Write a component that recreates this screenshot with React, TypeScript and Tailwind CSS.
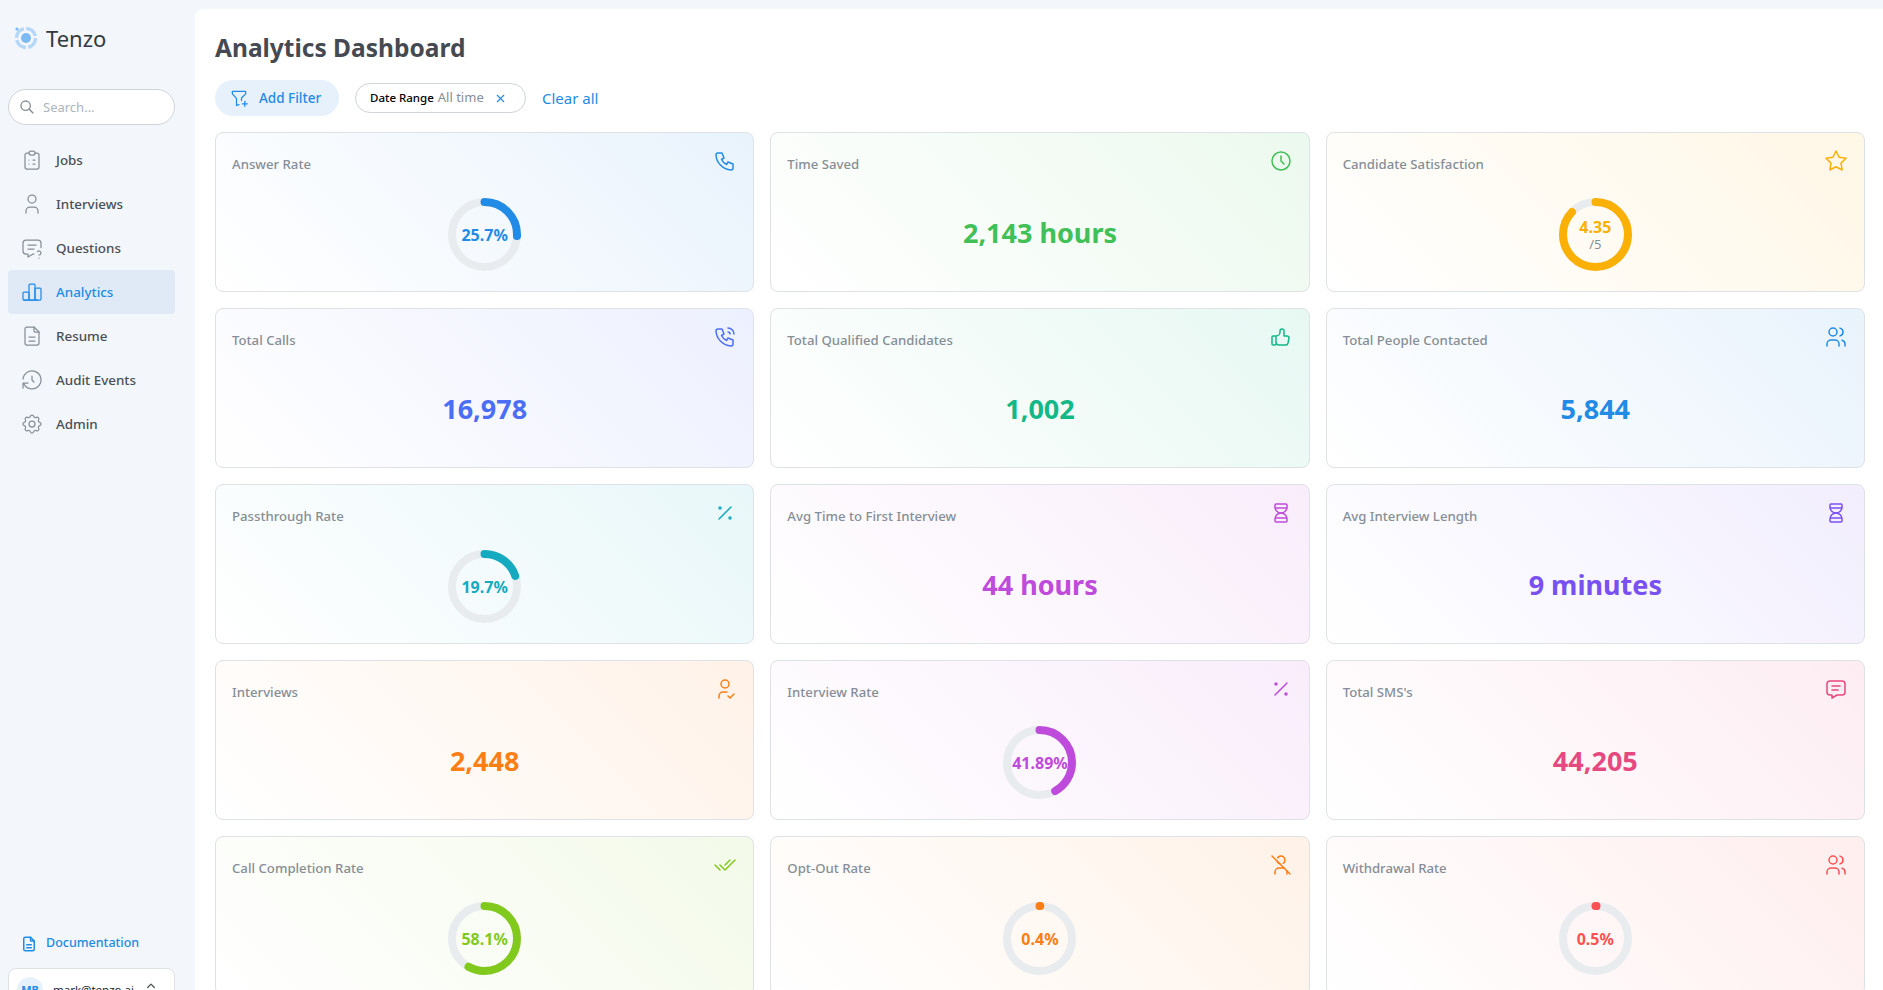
import React from "react";
import {
  TbChartBar,
  TbChecks,
  TbClipboardList,
  TbClock,
  TbFileDescription,
  TbFilterPlus,
  TbHistory,
  TbHourglass,
  TbMessage,
  TbMessageQuestion,
  TbPercentage,
  TbPhone,
  TbPhoneCall,
  TbSearch,
  TbSelector,
  TbSettings,
  TbStar,
  TbThumbUp,
  TbUser,
  TbUserCheck,
  TbUserOff,
  TbUsers,
  TbX,
} from "react-icons/tb";

const navItems = [
  { label: "Jobs", icon: TbClipboardList },
  { label: "Interviews", icon: TbUser },
  { label: "Questions", icon: TbMessageQuestion },
  { label: "Analytics", icon: TbChartBar, active: true },
  { label: "Resume", icon: TbFileDescription },
  { label: "Audit Events", icon: TbHistory },
  { label: "Admin", icon: TbSettings },
];

type Stat = {
  label: string;
  icon: React.ComponentType<{ size?: number; strokeWidth?: number }>;
  color: string;
  tint: string;
  value: string;
  ring?: number;
  sub?: string;
};

const stats: Stat[] = [
  { label: "Answer Rate", icon: TbPhone, color: "text-[#228be6]", tint: "to-[#e9f3fc]", value: "25.7%", ring: 25.7 },
  { label: "Time Saved", icon: TbClock, color: "text-[#40c057]", tint: "to-[#ecf9ee]", value: "2,143 hours" },
  { label: "Candidate Satisfaction", icon: TbStar, color: "text-[#fab005]", tint: "to-[#fff7e6]", value: "4.35", ring: 87, sub: "/5" },
  { label: "Total Calls", icon: TbPhoneCall, color: "text-[#4c6ef5]", tint: "to-[#edf0fe]", value: "16,978" },
  { label: "Total Qualified Candidates", icon: TbThumbUp, color: "text-[#12b886]", tint: "to-[#e7f8f3]", value: "1,002" },
  { label: "Total People Contacted", icon: TbUsers, color: "text-[#228be6]", tint: "to-[#e9f3fc]", value: "5,844" },
  { label: "Passthrough Rate", icon: TbPercentage, color: "text-[#15aabf]", tint: "to-[#e8f7f9]", value: "19.7%", ring: 19.7 },
  { label: "Avg Time to First Interview", icon: TbHourglass, color: "text-[#be4bdb]", tint: "to-[#f9edfb]", value: "44 hours" },
  { label: "Avg Interview Length", icon: TbHourglass, color: "text-[#7950f2]", tint: "to-[#f2eefe]", value: "9 minutes" },
  { label: "Interviews", icon: TbUserCheck, color: "text-[#fd7e14]", tint: "to-[#fff2e8]", value: "2,448" },
  { label: "Interview Rate", icon: TbPercentage, color: "text-[#be4bdb]", tint: "to-[#f9edfb]", value: "41.89%", ring: 41.89 },
  { label: "Total SMS's", icon: TbMessage, color: "text-[#e64980]", tint: "to-[#fdedf2]", value: "44,205" },
  { label: "Call Completion Rate", icon: TbChecks, color: "text-[#82c91e]", tint: "to-[#f3fae9]", value: "58.1%", ring: 58.1 },
  { label: "Opt-Out Rate", icon: TbUserOff, color: "text-[#fd7e14]", tint: "to-[#fff2e8]", value: "0.4%", ring: 0.4 },
  { label: "Withdrawal Rate", icon: TbUsers, color: "text-[#fa5252]", tint: "to-[#ffeeee]", value: "0.5%", ring: 0.5 },
];

const Ring = ({ percent, children }: { percent: number; children: React.ReactNode }) => {
  const radius = 32.5;
  const circumference = 2 * Math.PI * radius;
  return (
    <div className="relative h-[73px] w-[73px]">
      <svg width="73" height="73" viewBox="0 0 73 73" className="-rotate-90">
        <circle cx="36.5" cy="36.5" r={radius} fill="none" stroke="#e9ecef" strokeWidth="8" />
        <circle
          cx="36.5"
          cy="36.5"
          r={radius}
          fill="none"
          stroke="currentColor"
          strokeWidth="8"
          strokeLinecap="round"
          strokeDasharray={`${(circumference * percent) / 100} ${circumference}`}
        />
      </svg>
      <div className="absolute inset-0 flex flex-col items-center justify-center">{children}</div>
    </div>
  );
};

const StatCard = ({ stat }: { stat: Stat }) => {
  const Icon = stat.icon;
  return (
    <div className={`flex h-40 flex-col rounded-lg border border-[#dee2e6] bg-linear-45 from-white px-4 pt-4 ${stat.tint}`}>
      <div className="flex items-start justify-between">
        <span className="mt-[5px] text-[13.2px] leading-5 font-medium text-[#868e96]">{stat.label}</span>
        <span className={stat.color}>
          <Icon size={24} strokeWidth={1.5} />
        </span>
      </div>
      <div className={`flex flex-1 items-center justify-center pt-1 ${stat.color}`}>
        {stat.ring !== undefined ? (
          <Ring percent={stat.ring}>
            <span className="text-[16px] leading-[18px] font-bold">{stat.value}</span>
            {stat.sub && <span className="text-[13px] leading-4 text-[#868e96]">{stat.sub}</span>}
          </Ring>
        ) : (
          <span className="mb-[3px] text-[27px] leading-8 font-bold">{stat.value}</span>
        )}
      </div>
    </div>
  );
};

export default function App() {
  return (
    <div className="flex h-screen overflow-hidden bg-[#f3f6fa] font-['Noto_Sans',sans-serif]">
      <aside className="flex h-full w-[195px] shrink-0 flex-col pr-5 pl-2">
        <div className="flex h-[78px] items-center gap-[7px] pb-[2px] pl-[5px]">
          <svg width="26" height="26" viewBox="0 0 26 26" fill="none">
            <circle cx="13" cy="13" r="9.5" stroke="#b5d7f8" strokeWidth="3.5" strokeDasharray="12.5 2.4" />
            <circle cx="13" cy="13" r="5" fill="#7db9f2" />
            <circle cx="4" cy="4" r="1.6" fill="#7db9f2" />
          </svg>
          <span className="text-[22px] leading-7 text-[#343a40]">Tenzo</span>
        </div>
        <div className="mt-[11px] flex h-9 items-center gap-2 rounded-full border border-[#ced4da] bg-white pl-[10px]">
          <TbSearch size={16} className="text-[#868e96]" />
          <span className="pt-[2px] text-[13px] text-[#adb5bd]">Search...</span>
        </div>
        <nav className="mt-[13px] flex flex-col">
          {navItems.map((item) => {
            const Icon = item.icon;
            return (
              <div
                key={item.label}
                className={`flex h-11 items-center gap-3 rounded pl-3 text-[13.4px] font-medium ${
                  item.active ? "bg-[#dfeaf6] text-[#228be6]" : "text-[#495057]"
                }`}
              >
                <Icon size={24} strokeWidth={1.25} className={item.active ? "" : "text-[#868e96]"} />
                <span className="pt-px">{item.label}</span>
              </div>
            );
          })}
        </nav>
        <div className="mt-auto flex items-center gap-2 pl-[12px] text-[12.5px] font-medium text-[#228be6]">
          <TbFileDescription size={18} />
          <span>Documentation</span>
        </div>
        <div className="mt-[15px] mb-[-22px] flex h-11 shrink-0 items-center rounded-lg border border-[#dee2e6] bg-white pl-2">
          <span className="flex h-[26px] w-[26px] items-center justify-center rounded-full bg-[#e7f1fb] text-[11px] font-bold text-[#228be6]">
            MB
          </span>
          <span className="ml-[10px] text-[11.5px] text-[#212529]">mark@tenzo.ai</span>
          <TbSelector size={20} strokeWidth={1.5} className="mr-[13px] ml-auto text-[#495057]" />
        </div>
      </aside>
      <main className="mt-[9px] min-w-0 flex-1 rounded-tl-lg bg-white pr-[18px] pl-5">
        <h1 className="mt-[14px] text-[24.5px] leading-[50px] font-bold text-[#454a52]">Analytics Dashboard</h1>
        <div className="mt-[7px] flex items-center">
          <button className="flex h-9 w-[124px] items-center gap-[10px] rounded-full bg-[#e7f1fb] pl-[14px] text-[13.5px] font-medium text-[#228be6]">
            <TbFilterPlus size={20} strokeWidth={1.5} />
            <span>Add Filter</span>
          </button>
          <div className="ml-4 flex h-[30px] w-[171px] items-center rounded-full border border-[#ced4da] pl-[14px]">
            <span className="text-[11.5px] font-medium text-black">Date Range</span>
            <span className="ml-1 text-[13px] text-[#868e96]">All time</span>
            <TbX size={13} className="ml-[10px] text-[#228be6]" />
          </div>
          <span className="ml-4 text-[15px] text-[#228be6]">Clear all</span>
        </div>
        <div className="mt-4 grid grid-cols-3 gap-4">
          {stats.map((stat) => (
            <StatCard key={stat.label} stat={stat} />
          ))}
        </div>
      </main>
    </div>
  );
}
